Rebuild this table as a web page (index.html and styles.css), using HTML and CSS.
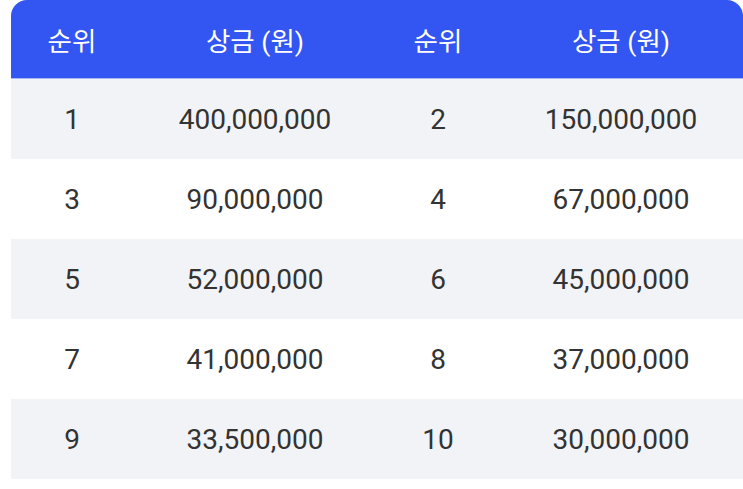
FILE: index.html
```html
<!DOCTYPE html>
<html lang="ko">
<head>
<meta charset="utf-8">
<link rel="stylesheet" href="styles.css">
</head>
<body>
<table class="prize">
  <thead>
    <tr><th>순위</th><th>상금 (원)</th><th>순위</th><th>상금 (원)</th></tr>
  </thead>
  <tbody>
    <tr><td>1</td><td>400,000,000</td><td>2</td><td>150,000,000</td></tr>
    <tr><td>3</td><td>90,000,000</td><td>4</td><td>67,000,000</td></tr>
    <tr><td>5</td><td>52,000,000</td><td>6</td><td>45,000,000</td></tr>
    <tr><td>7</td><td>41,000,000</td><td>8</td><td>37,000,000</td></tr>
    <tr><td>9</td><td>33,500,000</td><td>10</td><td>30,000,000</td></tr>
  </tbody>
</table>
</body>
</html>
```
FILE: styles.css
```css
html, body { margin: 0; padding: 0; background: #fff; }
body { padding-left: 11px; }
.prize {
  border-collapse: separate;
  border-spacing: 0;
  width: 732px;
  table-layout: fixed;
  font-family: Roboto, "Noto Sans CJK KR", sans-serif;
  color: #333;
}
.prize th:nth-child(odd), .prize td:nth-child(odd) { width: 122px; }
.prize th:nth-child(even), .prize td:nth-child(even) { width: 244px; }
.prize th {
  background: #3355f1;
  color: #fff;
  font-weight: 400;
  font-size: 26.5px;
  height: 78px;
  padding: 0;
  border-bottom: 1px solid #a9b8f5;
  text-align: center;
}
.prize th:first-child { border-top-left-radius: 16px; }
.prize th:last-child { border-top-right-radius: 16px; }
.prize td {
  height: 80px;
  padding: 0;
  text-align: center;
  font-size: 28px;
}
.prize tbody tr:nth-child(odd) td { background: #f2f3f7; }
.prize tbody tr:nth-child(even) td { background: #fff; }
```
